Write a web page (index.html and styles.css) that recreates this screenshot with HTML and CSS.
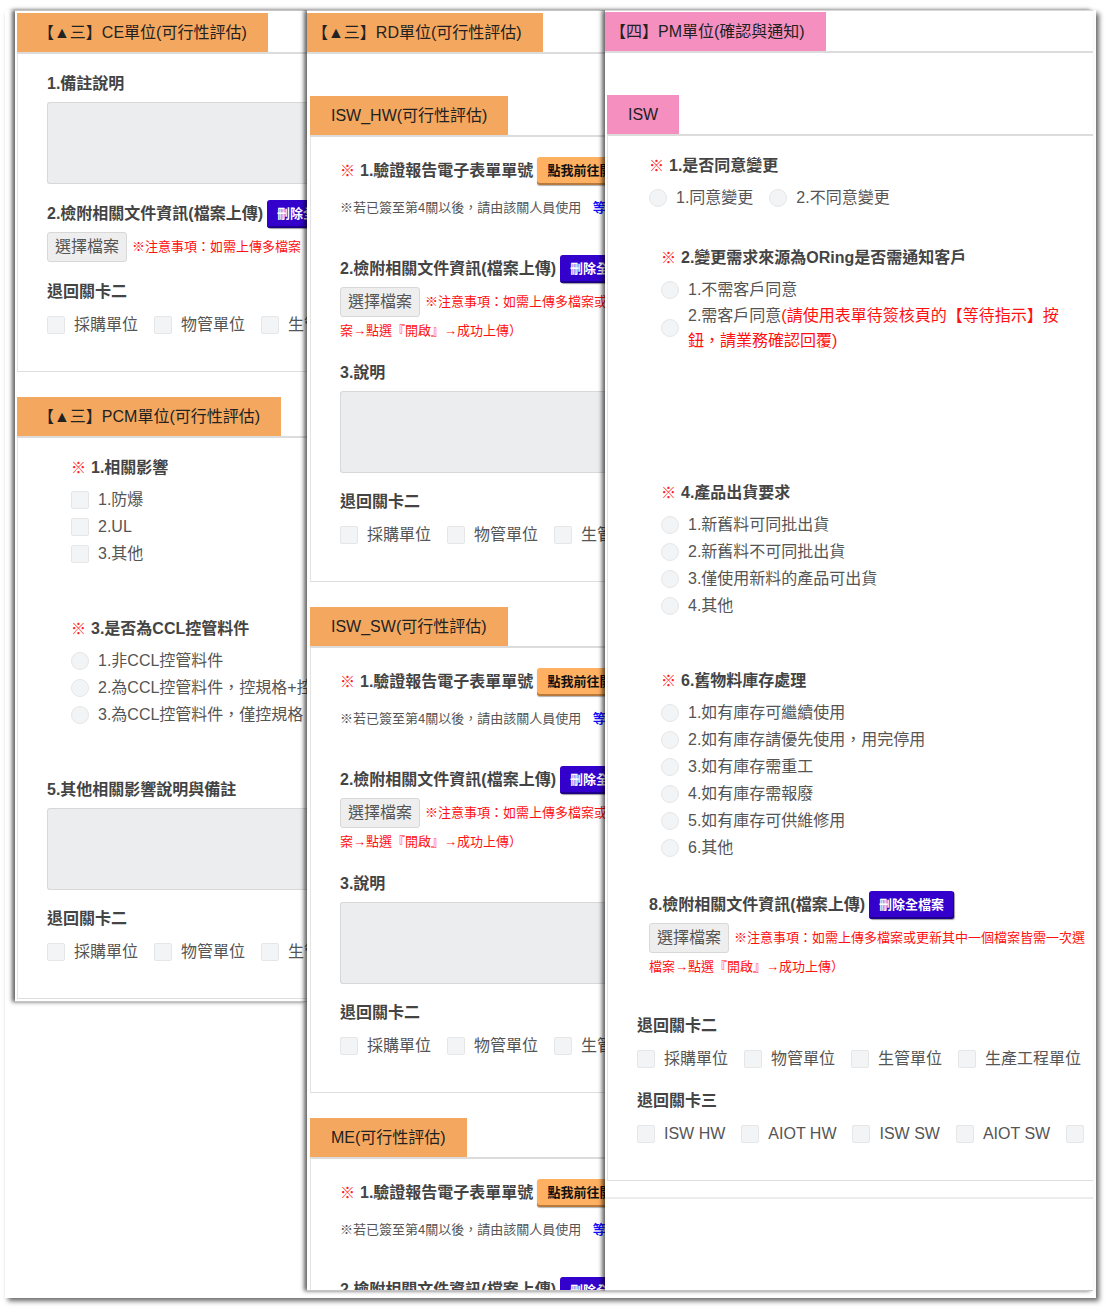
FILE: index.html
```html
<!DOCTYPE html>
<html lang="zh-Hant">
<head>
<meta charset="utf-8">
<meta name="viewport" content="width=device-width, initial-scale=1">
<title>可行性評估</title>
<link rel="stylesheet" href="styles.css">
</head>
<body>
<main class="sheet">

  <div class="panel panel-ce">
    <section class="section">
      <div class="tabs"><h2 class="tab">【▲三】CE單位(可行性評估)</h2></div>
      <div class="body">
        <label class="title" for="ce-note">1.備註說明</label>
        <textarea class="area" id="ce-note"></textarea>
        <div class="title-row after-area"><h3 class="title">2.檢附相關文件資訊(檔案上傳)</h3><button class="btn btn-delete" type="button">刪除全檔案</button></div>
        <div class="file-row"><button class="file" type="button">選擇檔案</button><span class="warn">※注意事項：如需上傳多檔案</span></div>
        <h3 class="title after-file">退回關卡二</h3>
        <div class="inline-options">
          <label class="option"><input type="checkbox">採購單位</label>
          <label class="option"><input type="checkbox">物管單位</label>
          <label class="option"><input type="checkbox">生管單位</label>
        </div>
      </div>
    </section>
    <section class="section">
      <div class="tabs"><h2 class="tab">【▲三】PCM單位(可行性評估)</h2></div>
      <div class="body">
        <div class="question deep">
          <h3 class="title"><span class="star">※</span>1.相關影響</h3>
          <div class="options">
            <label class="option"><input type="checkbox">1.防爆</label>
            <label class="option"><input type="checkbox">2.UL</label>
            <label class="option"><input type="checkbox">3.其他</label>
          </div>
        </div>
        <div class="question deep after-question">
          <h3 class="title"><span class="star">※</span>3.是否為CCL控管料件</h3>
          <div class="options">
            <label class="option"><input type="radio" name="ccl">1.非CCL控管料件</label>
            <label class="option"><input type="radio" name="ccl">2.為CCL控管料件，控規格+控</label>
            <label class="option"><input type="radio" name="ccl">3.為CCL控管料件，僅控規格</label>
          </div>
        </div>
        <label class="title after-question" for="pcm-note">5.其他相關影響說明與備註</label>
        <textarea class="area" id="pcm-note"></textarea>
        <h3 class="title after-area">退回關卡二</h3>
        <div class="inline-options">
          <label class="option"><input type="checkbox">採購單位</label>
          <label class="option"><input type="checkbox">物管單位</label>
          <label class="option"><input type="checkbox">生管單位</label>
        </div>
      </div>
    </section>
  </div>

  <div class="panel panel-rd">
    <div class="tabs"><h2 class="tab tab-cut">【▲三】RD單位(可行性評估)</h2></div>
    <div class="nested">
      <section class="section">
        <div class="tabs"><h2 class="tab">ISW_HW(可行性評估)</h2></div>
        <div class="body">
          <div class="title-row"><h3 class="title"><span class="star">※</span>1.驗證報告電子表單單號</h3><button class="btn btn-go" type="button">點我前往開單</button></div>
          <p class="hint">※若已簽至第4關以後，請由該關人員使用 <b>等待</b></p>
          <div class="title-row after-hint"><h3 class="title">2.檢附相關文件資訊(檔案上傳)</h3><button class="btn btn-delete" type="button">刪除全檔案</button></div>
          <div class="file-row"><button class="file" type="button">選擇檔案</button><span class="warn">※注意事項：如需上傳多檔案或</span></div>
          <p class="warn warn-more">案→點選『開啟』→成功上傳）</p>
          <label class="title after-warn" for="hw-note">3.說明</label>
          <textarea class="area" id="hw-note"></textarea>
          <h3 class="title after-area">退回關卡二</h3>
          <div class="inline-options">
            <label class="option"><input type="checkbox">採購單位</label>
            <label class="option"><input type="checkbox">物管單位</label>
            <label class="option"><input type="checkbox">生管單位</label>
          </div>
        </div>
      </section>
      <section class="section">
        <div class="tabs"><h2 class="tab">ISW_SW(可行性評估)</h2></div>
        <div class="body">
          <div class="title-row"><h3 class="title"><span class="star">※</span>1.驗證報告電子表單單號</h3><button class="btn btn-go" type="button">點我前往開單</button></div>
          <p class="hint">※若已簽至第4關以後，請由該關人員使用 <b>等待</b></p>
          <div class="title-row after-hint"><h3 class="title">2.檢附相關文件資訊(檔案上傳)</h3><button class="btn btn-delete" type="button">刪除全檔案</button></div>
          <div class="file-row"><button class="file" type="button">選擇檔案</button><span class="warn">※注意事項：如需上傳多檔案或</span></div>
          <p class="warn warn-more">案→點選『開啟』→成功上傳）</p>
          <label class="title after-warn" for="sw-note">3.說明</label>
          <textarea class="area" id="sw-note"></textarea>
          <h3 class="title after-area">退回關卡二</h3>
          <div class="inline-options">
            <label class="option"><input type="checkbox">採購單位</label>
            <label class="option"><input type="checkbox">物管單位</label>
            <label class="option"><input type="checkbox">生管單位</label>
          </div>
        </div>
      </section>
      <section class="section">
        <div class="tabs"><h2 class="tab">ME(可行性評估)</h2></div>
        <div class="body body-open">
          <div class="title-row"><h3 class="title"><span class="star">※</span>1.驗證報告電子表單單號</h3><button class="btn btn-go" type="button">點我前往開單</button></div>
          <p class="hint">※若已簽至第4關以後，請由該關人員使用 <b>等待</b></p>
          <div class="title-row after-hint peek"><h3 class="title">2.檢附相關文件資訊(檔案上傳)</h3><button class="btn btn-delete" type="button">刪除全檔案</button></div>
        </div>
      </section>
    </div>
  </div>

  <div class="panel panel-pm">
    <div class="tabs"><h2 class="tab tab-cut">【四】PM單位(確認與通知)</h2></div>
    <div class="nested">
      <section class="section">
        <div class="tabs"><h2 class="tab">ISW</h2></div>
        <div class="body">
          <div class="question">
            <h3 class="title"><span class="star">※</span>1.是否同意變更</h3>
            <div class="inline-options">
              <label class="option"><input type="radio" name="agree">1.同意變更</label>
              <label class="option"><input type="radio" name="agree">2.不同意變更</label>
            </div>
          </div>
          <div class="question deep after-inline">
            <h3 class="title"><span class="star">※</span>2.變更需求來源為ORing是否需通知客戶</h3>
            <div class="options">
              <label class="option"><input type="radio" name="notify">1.不需客戶同意</label>
              <label class="option"><input type="radio" name="notify"><span>2.需客戶同意<span class="alert">(請使用表單待簽核頁的【等待指示】按<br>鈕，請業務確認回覆)</span></span></label>
            </div>
          </div>
          <div class="question deep after-hidden-question">
            <h3 class="title"><span class="star">※</span>4.產品出貨要求</h3>
            <div class="options">
              <label class="option"><input type="radio" name="ship">1.新舊料可同批出貨</label>
              <label class="option"><input type="radio" name="ship">2.新舊料不可同批出貨</label>
              <label class="option"><input type="radio" name="ship">3.僅使用新料的產品可出貨</label>
              <label class="option"><input type="radio" name="ship">4.其他</label>
            </div>
          </div>
          <div class="question deep after-question">
            <h3 class="title"><span class="star">※</span>6.舊物料庫存處理</h3>
            <div class="options">
              <label class="option"><input type="radio" name="stock">1.如有庫存可繼續使用</label>
              <label class="option"><input type="radio" name="stock">2.如有庫存請優先使用，用完停用</label>
              <label class="option"><input type="radio" name="stock">3.如有庫存需重工</label>
              <label class="option"><input type="radio" name="stock">4.如有庫存需報廢</label>
              <label class="option"><input type="radio" name="stock">5.如有庫存可供維修用</label>
              <label class="option"><input type="radio" name="stock">6.其他</label>
            </div>
          </div>
          <div class="question upload">
            <div class="title-row"><h3 class="title">8.檢附相關文件資訊(檔案上傳)</h3><button class="btn btn-delete" type="button">刪除全檔案</button></div>
            <div class="file-row"><button class="file" type="button">選擇檔案</button><span class="warn">※注意事項：如需上傳多檔案或更新其中一個檔案皆需一次選</span></div>
            <p class="warn warn-more">檔案→點選『開啟』→成功上傳）</p>
          </div>
          <h3 class="title after-upload">退回關卡二</h3>
          <div class="inline-options">
            <label class="option"><input type="checkbox">採購單位</label>
            <label class="option"><input type="checkbox">物管單位</label>
            <label class="option"><input type="checkbox">生管單位</label>
            <label class="option"><input type="checkbox">生產工程單位</label>
          </div>
          <h3 class="title after-area">退回關卡三</h3>
          <div class="inline-options">
            <label class="option"><input type="checkbox">ISW HW</label>
            <label class="option"><input type="checkbox">AIOT HW</label>
            <label class="option"><input type="checkbox">ISW SW</label>
            <label class="option"><input type="checkbox">AIOT SW</label>
            <label class="option"><input type="checkbox">ME</label>
          </div>
        </div>
      </section>
    </div>
  </div>

</main>
</body>
</html>
```
FILE: styles.css
```css
* {
  box-sizing: border-box;
}

body {
  margin: 0;
  padding: 10px 13px 13px 5px;
  background: #fff;
  color: #555;
  font: 16px/26px "Liberation Sans", "Noto Sans CJK TC", sans-serif;
}

h2, h3, p {
  margin: 0;
}

button, input, textarea {
  font-family: inherit;
  margin: 0;
}

/* Sheet holding the three overlapping form panels */
.sheet {
  position: relative;
  display: grid;
  grid-template-columns: minmax(0, 292fr) minmax(0, 298fr) minmax(0, 488fr);
  padding: 0 3px 7px 10px;
  background: #fff;
  box-shadow: 3px 3px 5px rgba(0, 0, 0, .6);
}

.panel {
  position: relative;
  padding-top: 2px;
  border-top: 1px solid #c4c4c4;
  border-bottom: 1px solid #c4c4c4;
  background: #fff;
  box-shadow: -3px 0 4px rgba(0, 0, 0, .6);
  white-space: nowrap;
}

.panel-ce {
  align-self: start;
  padding-left: 2px;
  padding-bottom: 2px;
}

.panel-pm {
  padding-top: 1px;
  padding-bottom: 90px;
  border-top-color: #d8d8d8;
  --tab: #f48fc0;
}

/* Section header tabs */
.tabs {
  display: flex;
  border-bottom: 2px solid #dcdcdc;
}

.tab {
  padding: 0 21px;
  background: var(--tab, #f4a75e);
  color: #222;
  font-size: 16px;
  font-weight: 400;
  line-height: 39px;
}

.tab-cut {
  padding-left: 5px;
}

.nested {
  padding: 42px 0 0 3px;
}

.panel-pm .nested {
  padding-left: 2px;
  padding-bottom: 16px;
  border-bottom: 2px solid #ececec;
}

.section + .section {
  margin-top: 25px;
}

.body {
  overflow: hidden;
  padding: 17px 0 33px 29px;
  border-left: 1px solid #e4e4e4;
  border-bottom: 1px solid #dedede;
}

.panel-rd .body {
  padding-top: 20px;
}

.panel-rd .body-open {
  padding-bottom: 0;
  border-bottom: 0;
}

/* Titles */
.title {
  display: block;
  color: #444;
  font-size: 16px;
  font-weight: 700;
  line-height: 26px;
}

.star {
  margin-right: 5px;
  color: #f22;
  font-size: 15px;
}

.title-row {
  display: flex;
  align-items: center;
  gap: 4px;
  height: 28px;
}

.peek {
  align-items: flex-start;
  height: 13px;
  overflow: hidden;
}

.after-area { margin-top: 16px; }
.after-file { margin-top: 17px; }
.after-warn { margin-top: 19px; }
.after-hint { margin-top: 37px; }
.after-inline { margin-top: 34px; }
.after-question { margin-top: 49px; }
.after-upload { margin-top: 36px; }
.after-hidden-question { margin-top: 127px; }

/* Buttons */
.btn {
  flex: none;
  height: 28px;
  padding: 0 10px;
  border: 0;
  border-radius: 3px;
  font-size: 13px;
  font-weight: 700;
  line-height: 26px;
}

.btn-delete {
  background: #30c;
  box-shadow: inset -1px -2px 0 #1f008c, 1px 1px 1px rgba(0, 0, 0, .4);
  color: #fff;
}

.btn-go {
  background: #ffb060;
  box-shadow: inset 0 -2px 0 #b87a3c, 0 1px 1px rgba(0, 0, 0, .3);
  color: #111;
}

.file-row {
  display: flex;
  align-items: center;
  gap: 5px;
  margin-top: 4px;
}

.file {
  flex: none;
  height: 30px;
  padding: 0 7px;
  border: 1px solid #d8d8d8;
  border-radius: 3px;
  background: #eee;
  color: #555;
  font-size: 16px;
  line-height: 28px;
}

.warn {
  color: #f11;
  font-size: 13px;
  line-height: 20px;
}

.warn-more {
  margin-top: 4px;
}

.hint {
  margin-top: 13px;
  font-size: 13px;
  line-height: 20px;
}

.hint b {
  margin-left: 8px;
  color: #11f;
}

.area {
  display: block;
  width: 100%;
  height: 82px;
  margin-top: 5px;
  border: 1px solid #d6d8d9;
  border-right: 0;
  border-radius: 3px 0 0 3px;
  background: #ecedef;
  resize: none;
}

/* Check and radio options */
.options,
.inline-options {
  display: flex;
  margin-top: 6px;
}

.options {
  flex-direction: column;
}

.inline-options {
  gap: 16px;
}

.question .options,
.question .inline-options {
  margin-top: 5px;
}

.option {
  display: flex;
  flex: none;
  align-items: center;
  gap: 9px;
  min-height: 27px;
  line-height: 25px;
}

.option input {
  flex: none;
  width: 18px;
  height: 18px;
  border: 1px solid #e5e6e7;
  border-radius: 2px;
  background: #f3f4f5;
  appearance: none;
}

.option input[type="radio"] {
  border-radius: 50%;
}

.alert {
  color: #f11;
}

.deep {
  padding-left: 24px;
}

.panel-pm .question {
  padding-left: 12px;
}

.panel-pm .deep {
  padding-left: 24px;
}

.panel-pm .upload {
  margin-top: 30px;
}
```
